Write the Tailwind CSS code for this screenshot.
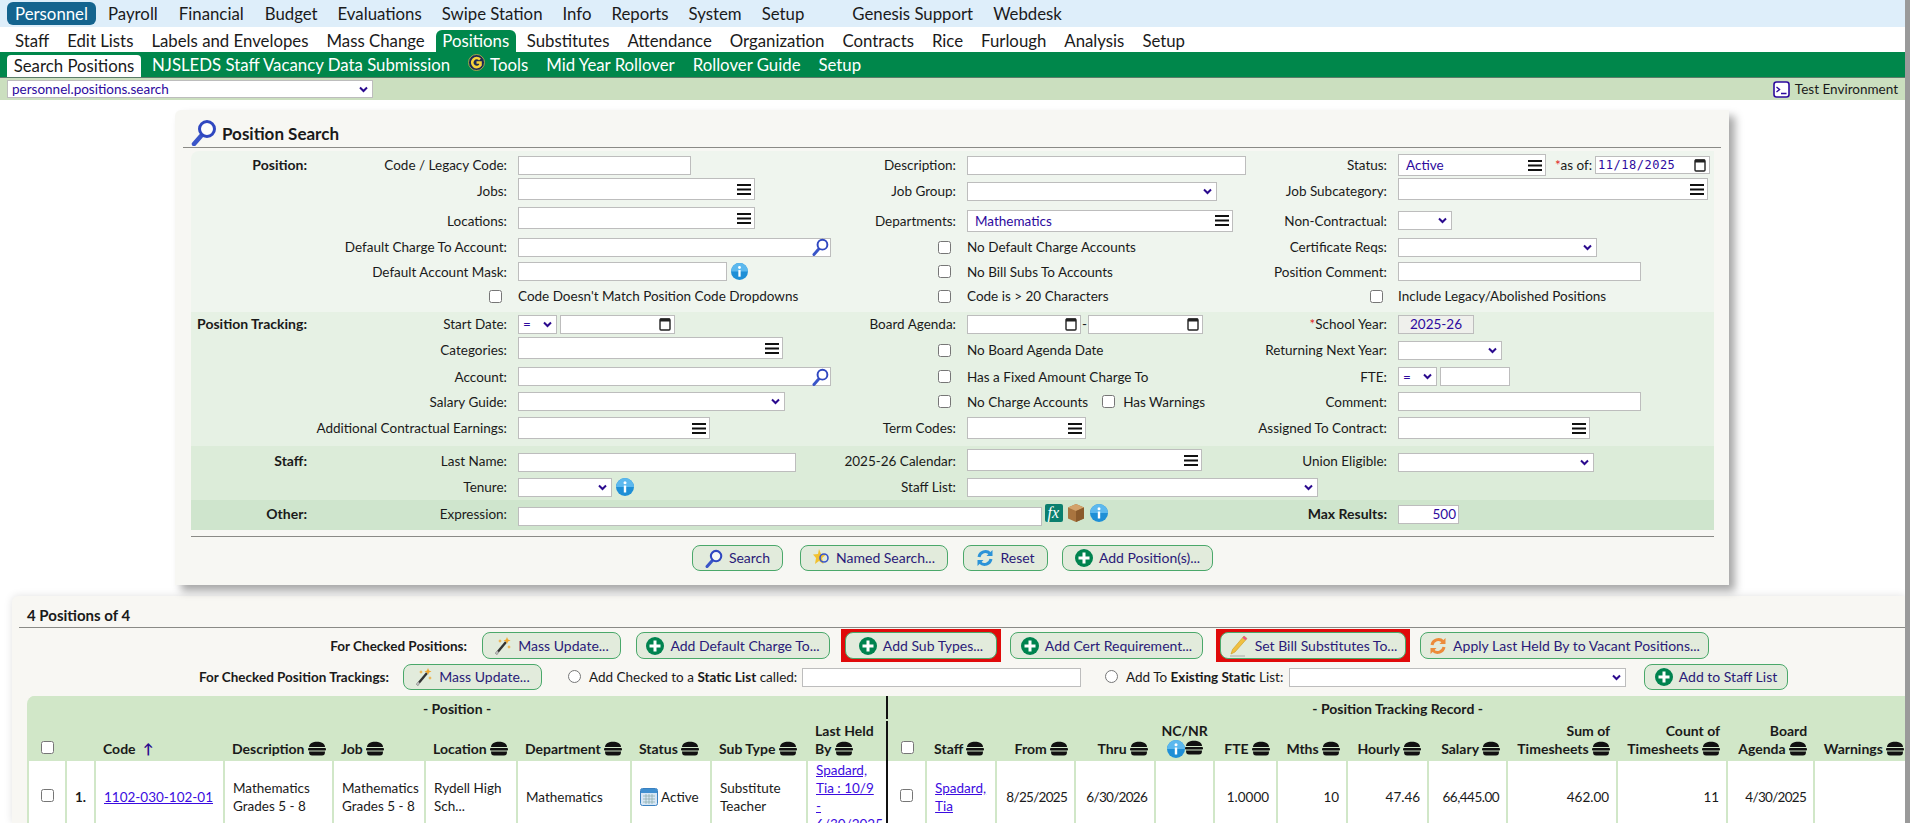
<!DOCTYPE html>
<html lang="en">

<head>
    <meta charset="UTF-8" />
    <title>Position Search</title>
    <script src="https://cdn.jsdelivr.net/npm/@tailwindcss/browser@4"></script>
</head>

<body class="h-[823px] overflow-hidden bg-white font-['Lato',sans-serif] text-[13.5px] leading-[18px] text-[#1a1a1a] border-r-[5px] border-[#9a9a9a]">
    <!-- Shared icons -->
    <svg class="hidden">
        <symbol id="menu" viewBox="0 0 14 11"><path d="M0 1h14M0 5.500h14M0 10h14" stroke="#111" stroke-width="2" /></symbol>
        <symbol id="chev" viewBox="0 0 9 7"><path d="M1 1.500l3.500 3.500L8 1.500" fill="none" stroke="#2a0a8e" stroke-width="2" /></symbol>
        <symbol id="cal" viewBox="0 0 12 14"><rect x="1" y="2" width="10" height="11" rx="1" fill="#fff" stroke="#222" stroke-width="1.400" /><rect x="1" y="1.500" width="10" height="3" fill="#222" /></symbol>
        <symbol id="lens" viewBox="0 0 26 27"><path d="M10 17L3 25" stroke="#3a55c8" stroke-width="4.500" stroke-linecap="round" /><circle cx="16" cy="10" r="7.500" fill="#fff" fill-opacity=".7" stroke="#2f47c0" stroke-width="3" /></symbol>
        <symbol id="info" viewBox="0 0 18 18"><circle cx="9" cy="9" r="9" fill="#1f8fd6" /><path d="M0 9a9 9 0 0 1 18 0z" fill="#5cb8ee" /><rect x="7.800" y="7.500" width="2.400" height="7" fill="#fff" /><circle cx="9" cy="4.800" r="1.500" fill="#fff" /></symbol>
        <symbol id="plus" viewBox="0 0 18 18"><circle cx="9" cy="9" r="9" fill="#00834f" /><path d="M9 3.500v11M3.500 9h11" stroke="#fff" stroke-width="3" /></symbol>
        <symbol id="burger" viewBox="0 0 18 15"><path d="M1 6c0-7 16-7 16 0z" fill="#111" /><rect x="0" y="7" width="18" height="2.500" rx="1" fill="#111" /><path d="M1 10.500h16c0 3-1 4-3 4H4c-2 0-3-1-3-4z" fill="#111" /></symbol>
        <symbol id="wand" viewBox="0 0 18 20"><path d="M2 18L12 6" stroke="#333" stroke-width="2.400" /><path d="M2 18l2-2.400" stroke="#bbb" stroke-width="2.400" /><path d="M13 1l1 2.500 2.500 1-2.500 1-1 2.500-1-2.500-2.500-1 2.500-1zM6 3l.6 1.400L8 5l-1.400.6L6 7l-.6-1.400L4 5l1.400-.6zM15 9l.6 1.400L17 11l-1.400.6L15 13l-.6-1.400L13 11l1.400-.6z" fill="#f0a52c" /></symbol>
        <symbol id="refresh" viewBox="0 0 18 18"><path d="M3 8a6.500 6.500 0 0 1 11-3.500" fill="none" stroke="#2b93d8" stroke-width="3" /><path d="M16.500 1v6h-6z" fill="#2b93d8" /><path d="M15 10a6.500 6.500 0 0 1-11 3.500" fill="none" stroke="#2b93d8" stroke-width="3" /><path d="M1.500 17v-6h6z" fill="#2b93d8" /></symbol>
    </svg>

    <!-- Module nav -->
    <nav class="h-[27px] bg-[#deeefa] flex items-center pl-[7px] text-[16.8px]">
        <a class="h-[23px] w-[89px] flex items-center justify-center rounded-md bg-[#14648f] text-white">Personnel</a>
        <a class="ml-[12px]">Payroll</a>
        <a class="ml-[21px]">Financial</a>
        <a class="ml-[21px]">Budget</a>
        <a class="ml-[20px]">Evaluations</a>
        <a class="ml-[20px]">Swipe Station</a>
        <a class="ml-[20px]">Info</a>
        <a class="ml-[20px]">Reports</a>
        <a class="ml-[20px]">System</a>
        <a class="ml-[20px]">Setup</a>
        <a class="ml-[48px]">Genesis Support</a>
        <a class="ml-[20px]">Webdesk</a>
    </nav>
    <nav class="h-[25px] flex items-end pl-[15px] text-[16.8px]">
        <a class="h-[22px] flex items-center">Staff</a>
        <a class="ml-[18px] h-[22px] flex items-center">Edit Lists</a>
        <a class="ml-[18px] h-[22px] flex items-center">Labels and Envelopes</a>
        <a class="ml-[18px] h-[22px] flex items-center">Mass Change</a>
        <a class="ml-[11px] h-[22px] w-[80px] flex items-center justify-center rounded-t-md bg-[#00874b] text-white">Positions</a>
        <a class="ml-[11px] h-[22px] flex items-center">Substitutes</a>
        <a class="ml-[18px] h-[22px] flex items-center">Attendance</a>
        <a class="ml-[18px] h-[22px] flex items-center">Organization</a>
        <a class="ml-[18px] h-[22px] flex items-center">Contracts</a>
        <a class="ml-[18px] h-[22px] flex items-center">Rice</a>
        <a class="ml-[18px] h-[22px] flex items-center">Furlough</a>
        <a class="ml-[18px] h-[22px] flex items-center">Analysis</a>
        <a class="ml-[18px] h-[22px] flex items-center">Setup</a>
    </nav>
    <nav class="h-[26px] bg-[#00874b] border-b border-[#5b7c69] flex items-end pl-[7px] text-[16.8px] text-white">
        <a class="h-[22px] w-[134px] flex items-center justify-center rounded-t-sm bg-white text-[#1a1a1a]">Search Positions</a>
        <a class="ml-[11px] h-[25px] flex items-center">NJSLEDS Staff Vacancy Data Submission</a>
        <a class="ml-[18px] h-[25px] flex items-center gap-[5px]">
            <svg class="w-[17px] h-[17px] -mt-[4px]" viewBox="0 0 17 17">
                <circle cx="8.500" cy="8.500" r="8" fill="#1d2a55" stroke="#c8b84a" stroke-width=".8" />
                <path d="M12 5.500A4.500 4.500 0 1 0 12.500 11V8.500H8.500" fill="none" stroke="#f7d23a" stroke-width="2.600" />
            </svg>Tools</a>
        <a class="ml-[18px] h-[25px] flex items-center">Mid Year Rollover</a>
        <a class="ml-[18px] h-[25px] flex items-center">Rollover Guide</a>
        <a class="ml-[18px] h-[25px] flex items-center">Setup</a>
    </nav>
    <div class="h-[22px] bg-[#cbdfbf] flex items-center justify-between pl-[7px] pr-[7px]">
        <div class="h-[18px] w-[366px] bg-white border border-[#bdbdbd] flex items-center justify-between pl-[4px] pr-[4px] text-[#2d0a9e]">
            personnel.positions.search
            <svg class="w-[9px] h-[7px]"><use href="#chev" /></svg>
        </div>
        <div class="flex items-center gap-[5px]">
            <svg class="w-[17px] h-[17px]" viewBox="0 0 17 17">
                <rect x="1" y="1" width="15" height="15" rx="2.500" fill="#fff" stroke="#2d0a9e" stroke-width="1.600" />
                <path d="M3.500 6l3 2.500-3 2.500M8 12.500h5.500" fill="none" stroke="#2d0a9e" stroke-width="1.400" />
            </svg>
            <span>Test Environment</span>
        </div>
    </div>

    <!-- Position Search panel -->
    <section class="relative mt-[10px] ml-[175px] w-[1554px] h-[475px] bg-[#f7f7f3] rounded-tl-md shadow-[6px_6px_8px_rgba(0,0,0,0.35)] px-[8px] pt-[10px]">
        <header class="h-[27px] flex items-center border-b border-[#8a8a86] pl-[8px] box-content">
            <svg class="w-[26px] h-[27px] -mt-[2px]"><use href="#lens" /></svg>
            <h2 class="ml-[5px] text-[17px] font-bold">Position Search</h2>
        </header>

        <div class="mt-[3px] ml-[8px] mr-[8px] w-[1523px] rounded-tl-lg">
            <!-- Position -->
            <div class="grid grid-cols-[116px_211px_322px_127px_280px_151px_316px] grid-rows-[26px_26px_33px_20px_29px_20px] items-center bg-[#eff5ee] rounded-tl-lg pt-[1px] pb-[6px]">
                <div class="text-right font-bold text-[14px]">Position:</div>
                <div class="text-right pr-[11px]">Code / Legacy Code:</div>
                <div class="h-[19px] w-[173px] bg-white border border-[#bdbdbd]"></div>
                <div class="text-right pr-[11px]">Description:</div>
                <div class="h-[19px] w-[279px] bg-white border border-[#bdbdbd]"></div>
                <div class="text-right pr-[11px]">Status:</div>
                <div class="flex items-center">
                    <div class="h-[22px] w-[148px] bg-white border border-[#bdbdbd] flex items-center justify-between pl-[7px] pr-[3px] text-[#2d0a9e]">Active<svg class="w-[14px] h-[11px]"><use href="#menu" /></svg></div>
                    <span class="ml-[9px] whitespace-nowrap"><span class="text-[#e01a1a]">*</span>as of:</span>
                    <div class="ml-[3px] h-[18px] w-[115px] bg-white border border-[#bdbdbd] flex items-center justify-between pl-[2px] pr-[3px] font-['DejaVu_Sans_Mono',monospace] text-[12px] tracking-[0.5px] text-[#2d0a9e]">11/18/2025<svg class="w-[12px] h-[14px]"><use href="#cal" /></svg></div>
                </div>

                <div></div>
                <div class="text-right pr-[11px]">Jobs:</div>
                <div class="-mt-[4px] h-[22px] w-[237px] bg-white border border-[#bdbdbd] flex items-center justify-end pr-[3px]"><svg class="w-[14px] h-[11px]"><use href="#menu" /></svg></div>
                <div class="text-right pr-[11px]">Job Group:</div>
                <div class="h-[19px] w-[250px] bg-white border border-[#bdbdbd] flex items-center justify-end pr-[4px]"><svg class="w-[9px] h-[7px]"><use href="#chev" /></svg></div>
                <div class="text-right pr-[11px]">Job Subcategory:</div>
                <div class="-mt-[4px] h-[22px] w-[310px] bg-white border border-[#bdbdbd] flex items-center justify-end pr-[3px]"><svg class="w-[14px] h-[11px]"><use href="#menu" /></svg></div>

                <div></div>
                <div class="text-right pr-[11px]">Locations:</div>
                <div class="-mt-[5px] h-[22px] w-[237px] bg-white border border-[#bdbdbd] flex items-center justify-end pr-[3px]"><svg class="w-[14px] h-[11px]"><use href="#menu" /></svg></div>
                <div class="text-right pr-[11px]">Departments:</div>
                <div class="h-[22px] w-[266px] bg-white border border-[#bdbdbd] flex items-center justify-between pl-[7px] pr-[3px] text-[#2d0a9e]">Mathematics<svg class="w-[14px] h-[11px]"><use href="#menu" /></svg></div>
                <div class="text-right pr-[11px]">Non-Contractual:</div>
                <div class="h-[19px] w-[54px] bg-white border border-[#bdbdbd] flex items-center justify-end pr-[4px]"><svg class="w-[9px] h-[7px]"><use href="#chev" /></svg></div>

                <div></div>
                <div class="text-right pr-[11px]">Default Charge To Account:</div>
                <div class="h-[19px] w-[313px] bg-white border border-[#bdbdbd] flex items-center justify-end pr-[1px]"><svg class="w-[17px] h-[18px]"><use href="#lens" /></svg></div>
                <div class="flex justify-end pr-[16px]"><input type="checkbox" class="w-[13px] h-[13px]" /></div>
                <div>No Default Charge Accounts</div>
                <div class="text-right pr-[11px]">Certificate Reqs:</div>
                <div class="h-[19px] w-[199px] bg-white border border-[#bdbdbd] flex items-center justify-end pr-[4px]"><svg class="w-[9px] h-[7px]"><use href="#chev" /></svg></div>

                <div></div>
                <div class="text-right pr-[11px]">Default Account Mask:</div>
                <div class="flex items-center gap-[4px]">
                    <div class="h-[19px] w-[209px] bg-white border border-[#bdbdbd]"></div>
                    <svg class="w-[17px] h-[17px]"><use href="#info" /></svg>
                </div>
                <div class="flex justify-end pr-[16px]"><input type="checkbox" class="w-[13px] h-[13px]" /></div>
                <div>No Bill Subs To Accounts</div>
                <div class="text-right pr-[11px]">Position Comment:</div>
                <div class="h-[19px] w-[243px] bg-white border border-[#bdbdbd]"></div>

                <div></div>
                <div class="flex justify-end pr-[16px]"><input type="checkbox" class="w-[13px] h-[13px]" /></div>
                <div class="whitespace-nowrap">Code Doesn't Match Position Code Dropdowns</div>
                <div class="flex justify-end pr-[16px]"><input type="checkbox" class="w-[13px] h-[13px]" /></div>
                <div>Code is &gt; 20 Characters</div>
                <div class="flex justify-end pr-[15px]"><input type="checkbox" class="w-[13px] h-[13px]" /></div>
                <div>Include Legacy/Abolished Positions</div>
            </div>

            <!-- Position Tracking -->
            <div class="grid grid-cols-[116px_211px_322px_127px_280px_151px_316px] grid-rows-[24px_28px_25px_25px_28px] items-center bg-[#e6f1e4] pb-[4px]">
                <div class="text-right font-bold text-[14px] whitespace-nowrap">Position Tracking:</div>
                <div class="text-right pr-[11px]">Start Date:</div>
                <div class="flex items-center gap-[3px]">
                    <div class="h-[19px] w-[39px] bg-white border border-[#bdbdbd] flex items-center justify-between pl-[4px] pr-[4px] text-[#2d0a9e]">=<svg class="w-[9px] h-[7px]"><use href="#chev" /></svg></div>
                    <div class="h-[19px] w-[115px] bg-white border border-[#bdbdbd] flex items-center justify-end pr-[3px]"><svg class="w-[12px] h-[14px]"><use href="#cal" /></svg></div>
                </div>
                <div class="text-right pr-[11px]">Board Agenda:</div>
                <div class="flex items-center gap-[1px]">
                    <div class="h-[19px] w-[114px] bg-white border border-[#bdbdbd] flex items-center justify-end pr-[3px]"><svg class="w-[12px] h-[14px]"><use href="#cal" /></svg></div>
                    <span>-</span>
                    <div class="h-[19px] w-[115px] bg-white border border-[#bdbdbd] flex items-center justify-end pr-[3px]"><svg class="w-[12px] h-[14px]"><use href="#cal" /></svg></div>
                </div>
                <div class="text-right pr-[11px]"><span class="text-[#e01a1a]">*</span>School Year:</div>
                <div class="h-[19px] w-[76px] bg-[#eff0ec] border border-[#bdbdbd] flex items-center justify-center text-[#2d0a9e]">2025-26</div>

                <div></div>
                <div class="text-right pr-[11px]">Categories:</div>
                <div class="-mt-[4px] h-[22px] w-[265px] bg-white border border-[#bdbdbd] flex items-center justify-end pr-[3px]"><svg class="w-[14px] h-[11px]"><use href="#menu" /></svg></div>
                <div class="flex justify-end pr-[16px]"><input type="checkbox" class="w-[13px] h-[13px]" /></div>
                <div>No Board Agenda Date</div>
                <div class="text-right pr-[11px]">Returning Next Year:</div>
                <div class="h-[19px] w-[104px] bg-white border border-[#bdbdbd] flex items-center justify-end pr-[4px]"><svg class="w-[9px] h-[7px]"><use href="#chev" /></svg></div>

                <div></div>
                <div class="text-right pr-[11px]">Account:</div>
                <div class="h-[19px] w-[313px] bg-white border border-[#bdbdbd] flex items-center justify-end pr-[1px]"><svg class="w-[17px] h-[18px]"><use href="#lens" /></svg></div>
                <div class="flex justify-end pr-[16px]"><input type="checkbox" class="w-[13px] h-[13px]" /></div>
                <div>Has a Fixed Amount Charge To</div>
                <div class="text-right pr-[11px]">FTE:</div>
                <div class="flex items-center gap-[3px]">
                    <div class="h-[19px] w-[39px] bg-white border border-[#bdbdbd] flex items-center justify-between pl-[4px] pr-[4px] text-[#2d0a9e]">=<svg class="w-[9px] h-[7px]"><use href="#chev" /></svg></div>
                    <div class="h-[19px] w-[70px] bg-white border border-[#bdbdbd]"></div>
                </div>

                <div></div>
                <div class="text-right pr-[11px]">Salary Guide:</div>
                <div class="h-[19px] w-[267px] bg-white border border-[#bdbdbd] flex items-center justify-end pr-[4px]"><svg class="w-[9px] h-[7px]"><use href="#chev" /></svg></div>
                <div class="flex justify-end pr-[16px]"><input type="checkbox" class="w-[13px] h-[13px]" /></div>
                <div class="flex items-center whitespace-nowrap">No Charge Accounts<input type="checkbox" class="ml-[14px] mr-[8px] w-[13px] h-[13px]" />Has Warnings</div>
                <div class="text-right pr-[11px]">Comment:</div>
                <div class="h-[19px] w-[243px] bg-white border border-[#bdbdbd]"></div>

                <div></div>
                <div class="text-right pr-[11px] whitespace-nowrap">Additional Contractual Earnings:</div>
                <div class="h-[22px] w-[192px] bg-white border border-[#bdbdbd] flex items-center justify-end pr-[3px]"><svg class="w-[14px] h-[11px]"><use href="#menu" /></svg></div>
                <div class="text-right pr-[11px]">Term Codes:</div>
                <div class="h-[22px] w-[119px] bg-white border border-[#bdbdbd] flex items-center justify-end pr-[3px]"><svg class="w-[14px] h-[11px]"><use href="#menu" /></svg></div>
                <div class="text-right pr-[11px] whitespace-nowrap">Assigned To Contract:</div>
                <div class="h-[22px] w-[192px] bg-white border border-[#bdbdbd] flex items-center justify-end pr-[3px]"><svg class="w-[14px] h-[11px]"><use href="#menu" /></svg></div>
            </div>

            <!-- Staff -->
            <div class="grid grid-cols-[116px_211px_322px_127px_280px_151px_316px] grid-rows-[30px_22px] items-center bg-[#dcecd9] pb-[2px]">
                <div class="text-right font-bold text-[14px]">Staff:</div>
                <div class="text-right pr-[11px]">Last Name:</div>
                <div class="mt-[3px] h-[19px] w-[278px] bg-white border border-[#bdbdbd]"></div>
                <div class="text-right pr-[11px]">2025-26 Calendar:</div>
                <div class="-mt-[2px] h-[22px] w-[235px] bg-white border border-[#bdbdbd] flex items-center justify-end pr-[3px]"><svg class="w-[14px] h-[11px]"><use href="#menu" /></svg></div>
                <div class="text-right pr-[11px]">Union Eligible:</div>
                <div class="mt-[3px] h-[19px] w-[196px] bg-white border border-[#bdbdbd] flex items-center justify-end pr-[4px]"><svg class="w-[9px] h-[7px]"><use href="#chev" /></svg></div>

                <div></div>
                <div class="text-right pr-[11px]">Tenure:</div>
                <div class="flex items-center gap-[4px]">
                    <div class="h-[19px] w-[94px] bg-white border border-[#bdbdbd] flex items-center justify-end pr-[4px]"><svg class="w-[9px] h-[7px]"><use href="#chev" /></svg></div>
                    <svg class="w-[18px] h-[18px]"><use href="#info" /></svg>
                </div>
                <div class="text-right pr-[11px]">Staff List:</div>
                <div class="h-[19px] w-[351px] bg-white border border-[#bdbdbd] flex items-center justify-end pr-[4px]"><svg class="w-[9px] h-[7px]"><use href="#chev" /></svg></div>
                <div></div>
                <div></div>
            </div>

            <!-- Other -->
            <div class="grid grid-cols-[116px_211px_322px_127px_280px_151px_316px] grid-rows-[28px] items-center bg-[#cfe5cd] pb-[2px]">
                <div class="text-right font-bold text-[14px]">Other:</div>
                <div class="text-right pr-[11px]">Expression:</div>
                <div class="mt-[4px] flex items-center">
                    <div class="shrink-0 h-[19px] w-[524px] bg-white border border-[#bdbdbd]"></div>
                    <svg class="shrink-0 ml-[3px] -mt-[7px] w-[18px] h-[18px]" viewBox="0 0 18 18">
                        <rect width="18" height="18" rx="2" fill="#0a7f6e" />
                        <text x="2.500" y="14" font-family="Liberation Serif" font-style="italic" font-size="16" fill="#fff">fx</text>
                    </svg>
                    <svg class="shrink-0 ml-[5px] -mt-[7px] w-[16px] h-[18px]" viewBox="0 0 16 18">
                        <path d="M8 0l8 3.500v11L8 18l-8-3.500v-11z" fill="#a9743f" />
                        <path d="M8 0l8 3.500L8 7 0 3.500z" fill="#d3a26a" />
                        <path d="M8 7v11l8-3.500v-11z" fill="#8a5a2c" />
                    </svg>
                    <svg class="shrink-0 ml-[6px] -mt-[7px] w-[18px] h-[18px]"><use href="#info" /></svg>
                </div>
                <div></div>
                <div></div>
                <div class="text-right pr-[11px] font-bold text-[14px]">Max Results:</div>
                <div class="h-[19px] w-[61px] bg-white border border-[#bdbdbd] flex items-center justify-end pr-[2px] text-[#2d0a9e]">500</div>
            </div>
        </div>

        <!-- Search buttons -->
        <div class="mt-[6px] ml-[8px] w-[1523px] border-t border-[#8a8a86] pt-[8px] flex text-[14px]">
            <button class="ml-[501px] h-[26px] w-[91px] rounded-lg border border-[#4aa86a] bg-[#e2ebdc] flex items-center justify-center gap-[6px] text-[#2a1a78]"><svg class="w-[18px] h-[19px]"><use href="#lens" /></svg>Search</button>
            <button class="ml-[17px] h-[26px] w-[148px] rounded-lg border border-[#4aa86a] bg-[#e2ebdc] flex items-center justify-center gap-[6px] text-[#2a1a78]">
                <svg class="w-[17px] h-[20px]" viewBox="0 0 17 20">
                    <path d="M6 1l2 5 5 .5-4 3.500 1.500 6L6 13l-4 3 1-6-3-3.500 5-.5z" fill="#f2c230" />
                    <circle cx="11" cy="10" r="4" fill="none" stroke="#3a55c8" stroke-width="1.600" />
                </svg>Named Search...</button>
            <button class="ml-[15px] h-[26px] w-[85px] rounded-lg border border-[#4aa86a] bg-[#e2ebdc] flex items-center justify-center gap-[6px] text-[#2a1a78]"><svg class="w-[18px] h-[18px]"><use href="#refresh" /></svg>Reset</button>
            <button class="ml-[14px] h-[26px] w-[151px] rounded-lg border border-[#4aa86a] bg-[#e2ebdc] flex items-center justify-center gap-[6px] text-[#2a1a78]"><svg class="w-[18px] h-[18px]"><use href="#plus" /></svg>Add Position(s)...</button>
        </div>
    </section>

    <!-- Results panel -->
    <section class="mt-[11px] ml-[12px] h-[227px] bg-[#f8f7f3] rounded-tl-md shadow-[0_0_8px_rgba(0,0,0,0.12)] pl-[7px] overflow-hidden">
        <div class="h-[32px] flex items-end pl-[8px] pb-[3px] border-b border-[#8a8a86] text-[15px] font-bold">4 Positions of 4</div>

        <div class="mt-[4px] h-[27px] flex items-center">
            <b class="w-[448px] text-right">For Checked Positions:</b>
            <button class="ml-[15px] h-[27px] w-[139px] rounded-lg border border-[#4aa86a] bg-[#e2ebdc] flex items-center justify-center gap-[6px] text-[14px] text-[#2a1a78]"><svg class="w-[18px] h-[20px]"><use href="#wand" /></svg>Mass Update...</button>
            <button class="ml-[15px] h-[27px] w-[194px] rounded-lg border border-[#4aa86a] bg-[#e2ebdc] flex items-center justify-center gap-[6px] text-[14px] text-[#2a1a78]"><svg class="w-[18px] h-[18px]"><use href="#plus" /></svg>Add Default Charge To...</button>
            <div class="ml-[11px] px-[4px] py-[3px] bg-[#e00a0a]">
                <button class="h-[27px] w-[152px] rounded-lg border border-[#4aa86a] bg-[#e2ebdc] flex items-center justify-center gap-[6px] text-[14px] text-[#2a1a78]"><svg class="w-[18px] h-[18px]"><use href="#plus" /></svg>Add Sub Types...</button>
            </div>
            <button class="ml-[9px] h-[27px] w-[193px] rounded-lg border border-[#4aa86a] bg-[#e2ebdc] flex items-center justify-center gap-[6px] text-[14px] text-[#2a1a78]"><svg class="w-[18px] h-[18px]"><use href="#plus" /></svg>Add Cert Requirement...</button>
            <div class="ml-[13px] px-[4px] py-[3px] bg-[#e00a0a]">
                <button class="h-[27px] w-[186px] rounded-lg border border-[#4aa86a] bg-[#e2ebdc] flex items-center justify-center gap-[6px] text-[14px] text-[#2a1a78]">
                    <svg class="w-[20px] h-[22px]" viewBox="0 0 20 22">
                        <path d="M15 1l3 2.500L6 17l-4 2 1.500-4.500z" fill="#f0c040" stroke="#c99a20" stroke-width=".6" />
                        <path d="M15 1l3 2.500-1.500 1.700-3-2.500z" fill="#e8558a" />
                        <path d="M1 21h15" stroke="#aaa" />
                    </svg>Set Bill Substitutes To...</button>
            </div>
            <button class="ml-[10px] h-[27px] w-[289px] rounded-lg border border-[#4aa86a] bg-[#e2ebdc] flex items-center justify-center gap-[6px] text-[14px] text-[#2a1a78]">
                <svg class="w-[18px] h-[18px]" viewBox="0 0 18 18">
                    <path d="M3 8a6.500 6.500 0 0 1 11-3.500" fill="none" stroke="#ec8b3a" stroke-width="3" />
                    <path d="M16.500 1v6h-6z" fill="#ec8b3a" />
                    <path d="M15 10a6.500 6.500 0 0 1-11 3.500" fill="none" stroke="#ec8b3a" stroke-width="3" />
                    <path d="M1.500 17v-6h6z" fill="#ec8b3a" />
                </svg>Apply Last Held By to Vacant Positions...</button>
        </div>

        <div class="mt-[5px] h-[26px] flex items-center">
            <b class="w-[370px] text-right">For Checked Position Trackings:</b>
            <button class="ml-[14px] h-[26px] w-[139px] rounded-lg border border-[#4aa86a] bg-[#e2ebdc] flex items-center justify-center gap-[6px] text-[14px] text-[#2a1a78]"><svg class="w-[18px] h-[20px]"><use href="#wand" /></svg>Mass Update...</button>
            <input type="radio" class="ml-[26px] w-[13px] h-[13px] -mt-[2px]" />
            <span class="ml-[8px] w-[213px] whitespace-nowrap">Add Checked to a <b>Static List</b> called:</span>
            <div class="h-[19px] w-[279px] bg-white border border-[#bdbdbd]"></div>
            <input type="radio" class="ml-[24px] w-[13px] h-[13px] -mt-[2px]" />
            <span class="ml-[8px] w-[163px] whitespace-nowrap">Add To <b>Existing Static</b> List:</span>
            <div class="h-[19px] w-[337px] bg-white border border-[#bdbdbd] flex items-center justify-end pr-[4px]"><svg class="w-[9px] h-[7px]"><use href="#chev" /></svg></div>
            <button class="ml-[18px] h-[26px] w-[144px] rounded-lg border border-[#4aa86a] bg-[#e2ebdc] flex items-center justify-center gap-[6px] text-[14px] text-[#2a1a78]"><svg class="w-[18px] h-[18px]"><use href="#plus" /></svg>Add to Staff List</button>
        </div>

        <!-- Results table -->
        <div class="mt-[6px] ml-[8px] w-[1879px] rounded-tl-lg overflow-hidden">
            <table class="table-fixed w-[1879px] border-collapse bg-[#d1e7c8]">
                <colgroup>
                    <col class="w-[38px]" /><col class="w-[29px]" /><col class="w-[129px]" /><col class="w-[109px]" /><col class="w-[92px]" /><col class="w-[92px]" /><col class="w-[114px]" /><col class="w-[80px]" /><col class="w-[96px]" /><col class="w-[80px]" />
                    <col class="w-[39px]" /><col class="w-[70px]" /><col class="w-[79px]" /><col class="w-[80px]" /><col class="w-[59px]" /><col class="w-[63px]" /><col class="w-[70px]" /><col class="w-[81px]" /><col class="w-[79px]" /><col class="w-[110px]" /><col class="w-[110px]" /><col class="w-[87px]" /><col class="w-[93px]" />
                </colgroup>
                <thead class="text-[14px]">
                    <tr class="h-[23px]">
                        <th colspan="10" class="font-bold border-r-2 border-r-[#111] border-y-2 border-y-[#d1e7c8]">- Position -</th>
                        <th colspan="13" class="font-bold">- Position Tracking Record -</th>
                    </tr>
                    <tr class="h-[40px] align-bottom [&>th]:pb-[1px]">
                        <th><input type="checkbox" class="mb-[3px] w-[13px] h-[13px]" /></th>
                        <th></th>
                        <th class="text-left pl-[8px] font-bold">Code <span class="ml-[4px] text-[#2a0a8e]">↑</span></th>
                        <th class="text-left pl-[8px] font-bold whitespace-nowrap">Description <svg class="inline w-[18px] h-[15px] align-[-2px]"><use href="#burger" /></svg></th>
                        <th class="text-left pl-[8px] font-bold">Job <svg class="inline w-[18px] h-[15px] align-[-2px]"><use href="#burger" /></svg></th>
                        <th class="text-left pl-[8px] font-bold">Location <svg class="inline w-[18px] h-[15px] align-[-2px]"><use href="#burger" /></svg></th>
                        <th class="text-left pl-[8px] font-bold whitespace-nowrap">Department <svg class="inline w-[18px] h-[15px] align-[-2px]"><use href="#burger" /></svg></th>
                        <th class="text-left pl-[8px] font-bold">Status <svg class="inline w-[18px] h-[15px] align-[-2px]"><use href="#burger" /></svg></th>
                        <th class="text-left pl-[8px] font-bold whitespace-nowrap">Sub Type <svg class="inline w-[18px] h-[15px] align-[-2px]"><use href="#burger" /></svg></th>
                        <th class="text-left pl-[8px] font-bold border-r-2 border-[#111]">Last Held By <svg class="inline w-[18px] h-[15px] align-[-2px]"><use href="#burger" /></svg></th>
                        <th><input type="checkbox" class="mb-[3px] w-[13px] h-[13px]" /></th>
                        <th class="text-left pl-[8px] font-bold whitespace-nowrap">Staff <svg class="inline w-[18px] h-[15px] align-[-2px]"><use href="#burger" /></svg></th>
                        <th class="text-right pr-[7px] font-bold whitespace-nowrap">From <svg class="inline w-[18px] h-[15px] align-[-2px]"><use href="#burger" /></svg></th>
                        <th class="text-right pr-[7px] font-bold whitespace-nowrap">Thru <svg class="inline w-[18px] h-[15px] align-[-2px]"><use href="#burger" /></svg></th>
                        <th class="text-center font-bold leading-[18px]">NC/NR <span class="flex justify-center"><svg class="w-[18px] h-[18px]"><use href="#info" /></svg><svg class="w-[18px] h-[15px]"><use href="#burger" /></svg></span></th>
                        <th class="text-right pr-[7px] font-bold whitespace-nowrap">FTE <svg class="inline w-[18px] h-[15px] align-[-2px]"><use href="#burger" /></svg></th>
                        <th class="text-right pr-[7px] font-bold whitespace-nowrap">Mths <svg class="inline w-[18px] h-[15px] align-[-2px]"><use href="#burger" /></svg></th>
                        <th class="text-right pr-[7px] font-bold whitespace-nowrap">Hourly <svg class="inline w-[18px] h-[15px] align-[-2px]"><use href="#burger" /></svg></th>
                        <th class="text-right pr-[7px] font-bold whitespace-nowrap">Salary <svg class="inline w-[18px] h-[15px] align-[-2px]"><use href="#burger" /></svg></th>
                        <th class="text-right pr-[7px] font-bold">Sum of<br /><span class="whitespace-nowrap">Timesheets <svg class="inline w-[18px] h-[15px] align-[-2px]"><use href="#burger" /></svg></span></th>
                        <th class="text-right pr-[7px] font-bold">Count of<br /><span class="whitespace-nowrap">Timesheets <svg class="inline w-[18px] h-[15px] align-[-2px]"><use href="#burger" /></svg></span></th>
                        <th class="text-right pr-[7px] font-bold">Board<br /><span class="whitespace-nowrap">Agenda <svg class="inline w-[18px] h-[15px] align-[-2px]"><use href="#burger" /></svg></span></th>
                        <th class="text-right pr-[3px] font-bold whitespace-nowrap">Warnings <svg class="inline w-[18px] h-[15px] align-[-2px]"><use href="#burger" /></svg></th>
                    </tr>
                </thead>
                <tbody>
                    <tr class="h-[72px] bg-white">
                        <td class="border-2 border-[#d1e7c8] text-center"><input type="checkbox" class="w-[13px] h-[13px]" /></td>
                        <td class="border-2 border-[#d1e7c8] pl-[8px] font-bold">1.</td>
                        <td class="border-2 border-[#d1e7c8] pl-[8px]"><a class="underline text-[#3b0ce0]">1102-030-102-01</a></td>
                        <td class="border-2 border-[#d1e7c8] pl-[8px]">Mathematics Grades 5 - 8</td>
                        <td class="border-2 border-[#d1e7c8] pl-[8px]">Mathematics Grades 5 - 8</td>
                        <td class="border-2 border-[#d1e7c8] pl-[8px]">Rydell High Sch...</td>
                        <td class="border-2 border-[#d1e7c8] pl-[8px]">Mathematics</td>
                        <td class="border-2 border-[#d1e7c8]">
                            <span class="flex items-center gap-[3px] whitespace-nowrap pl-[8px]">
                                <svg class="w-[18px] h-[18px]" viewBox="0 0 18 18">
                                    <rect x=".5" y=".5" width="17" height="17" rx="2" fill="#d6e6f5" stroke="#3a80c0" />
                                    <rect x="1" y="1" width="16" height="4" fill="#3f8fd0" />
                                    <path d="M3 8h12M3 11h12M3 14h12M6 6v10M9 6v10M12 6v10" stroke="#8aa" stroke-width=".7" />
                                </svg>Active</span>
                        </td>
                        <td class="border-2 border-[#d1e7c8] pl-[8px]">Substitute Teacher</td>
                        <td class="border-2 border-l-[#d1e7c8] border-y-[#d1e7c8] border-r-[#111] pl-[8px]"><a class="underline text-[#3b0ce0]">Spadard,<br />Tia : 10/9<br />-<br />6/30/2025</a></td>
                        <td class="border-2 border-[#d1e7c8] text-center"><input type="checkbox" class="w-[13px] h-[13px]" /></td>
                        <td class="border-2 border-[#d1e7c8] pl-[8px]"><a class="underline text-[#3b0ce0]">Spadard, Tia</a></td>
                        <td class="border-2 border-[#d1e7c8] text-right pr-[7px] tracking-[-0.7px]">8/25/2025</td>
                        <td class="border-2 border-[#d1e7c8] text-right pr-[7px] tracking-[-0.7px]">6/30/2026</td>
                        <td class="border-2 border-[#d1e7c8]"></td>
                        <td class="border-2 border-[#d1e7c8] text-right pr-[7px]">1.0000</td>
                        <td class="border-2 border-[#d1e7c8] text-right pr-[7px]">10</td>
                        <td class="border-2 border-[#d1e7c8] text-right pr-[7px]">47.46</td>
                        <td class="border-2 border-[#d1e7c8] text-right pr-[7px] tracking-[-0.5px]">66,445.00</td>
                        <td class="border-2 border-[#d1e7c8] text-right pr-[7px]">462.00</td>
                        <td class="border-2 border-[#d1e7c8] text-right pr-[7px]">11</td>
                        <td class="border-2 border-[#d1e7c8] text-right pr-[7px] tracking-[-0.7px]">4/30/2025</td>
                        <td class="border-2 border-[#d1e7c8]"></td>
                    </tr>
                </tbody>
            </table>
        </div>
    </section>
</body>

</html>
